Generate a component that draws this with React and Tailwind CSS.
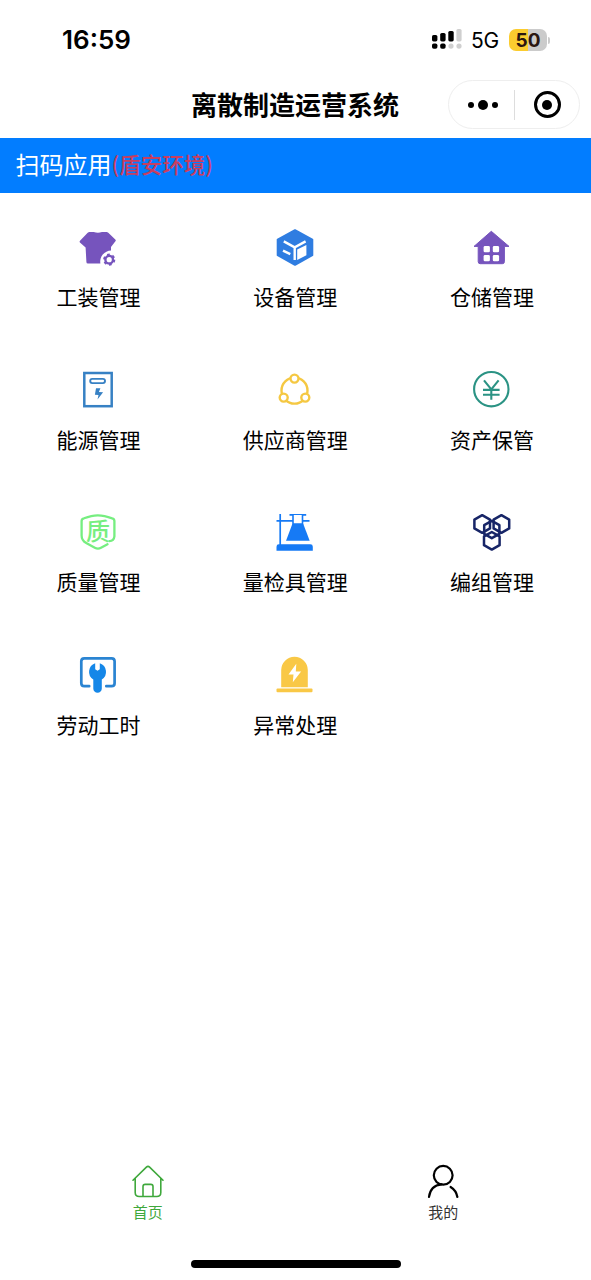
const svgProps = {
  viewBox: "0 0 40 40",
  fill: "none",
  className: "block w-10 h-10",
};

function ToolingIcon() {
  return (
    <svg {...svgProps}>
      <path d="M11.5 4h4.3q4.2 1.6 8.2 0h4.5q1 0 1.8.7l7 6.8q.9.9.1 1.8l-4.4 5.6v3.7a11 11 0 0 0-10.6 12.9H10q-1.6 0-1.6-1.6L7.6 19.4l-5.4-4.6q-1.1-1-.2-2l7.7-8.1q.8-.7 1.8-.7z" fill="#7654bd" />
      <circle cx="31.2" cy="31.7" r="3.8" stroke="#7654bd" strokeWidth="2.4" />
      <circle cx="31.2" cy="31.7" r="5.2" stroke="#7654bd" strokeWidth="1.8" strokeDasharray="2.7 2.745" />
    </svg>
  );
}

function DeviceIcon() {
  return (
    <svg {...svgProps}>
      <path d="M20 2.2 37.3 11.6v15.6L20 36.8 2.7 27.2V11.6z" fill="#2f7de1" stroke="#2f7de1" strokeWidth="2" strokeLinejoin="round" />
      <path d="m8.8 13.4 10.9 6 10.9-6M19.7 19.4V32M8 22.6l7.3 3.6" stroke="#fff" strokeWidth="2.4" />
      <path d="m22.2 21.6 9.2-4.6v10.2l-9.2 4.9z" fill="#fff" />
    </svg>
  );
}

function WarehouseIcon() {
  return (
    <svg {...svgProps}>
      <path d="M19.3 3.3 37 18.4H32.4v15.3a2 2 0 0 1-2 2H8.2a2 2 0 0 1-2-2V18.4H2z" fill="#7654bd" stroke="#7654bd" strokeWidth="1" strokeLinejoin="round" />
      <rect x="11.6" y="18" width="6.3" height="6.3" rx="1.4" fill="#fff" />
      <rect x="20.8" y="18" width="6.3" height="6.3" rx="1.4" fill="#fff" />
      <rect x="11.6" y="27" width="6.3" height="6.3" rx="1.4" fill="#fff" />
      <rect x="20.8" y="27" width="6.3" height="6.3" rx="1.4" fill="#fff" />
    </svg>
  );
}

function EnergyIcon() {
  return (
    <svg {...svgProps}>
      <rect x="6.3" y="3" width="27.4" height="33.2" stroke="#3781c4" strokeWidth="2.5" />
      <rect x="12.2" y="8.9" width="14.8" height="4.2" rx="2.1" stroke="#3781c4" strokeWidth="1.9" />
      <path d="M18 18.3h4.4l-1.5 3.8 4.2.2-5.6 7.2 1-4.5-3.6-.2z" fill="#3781c4" />
    </svg>
  );
}

function SupplierIcon() {
  return (
    <svg {...svgProps}>
      <circle cx="19.5" cy="20.6" r="13" stroke="#f5c842" strokeWidth="2.4" />
      <circle cx="19.5" cy="8.6" r="4" fill="#fff" stroke="#f5c842" strokeWidth="2.4" />
      <circle cx="8.7" cy="27.6" r="4" fill="#fff" stroke="#f5c842" strokeWidth="2.4" />
      <circle cx="30.3" cy="27.6" r="4" fill="#fff" stroke="#f5c842" strokeWidth="2.4" />
    </svg>
  );
}

function AssetIcon() {
  return (
    <svg {...svgProps}>
      <circle cx="19.3" cy="19.2" r="17.2" stroke="#2b9384" strokeWidth="2.1" />
      <path d="m12 10.4 7.3 9 7.3-9M19.3 19.4v10.4M11 19.9h16.6M11 24.7h16.6" stroke="#2b9384" strokeWidth="2.1" />
    </svg>
  );
}

function QualityIcon() {
  return (
    <svg {...svgProps}>
      <path d="M36.4 20V8q0-2.2-2.2-2.7Q26 2.4 20 2.3T6 5.3Q3.6 5.9 3.6 8v14.5q0 5 4.6 7.6l8.6 4.7q3.2 1.7 6.2 0l6.5-3.6M36.4 20v3.4q-.5 4.6-5 4.8" stroke="#76ee80" strokeWidth="2.3" strokeLinecap="round" />
      <text x="20" y="27" textAnchor="middle" fontSize="24" fontWeight="500" fontFamily="'Noto Sans CJK SC', sans-serif" fill="#76ee80">质</text>
    </svg>
  );
}

function GaugeIcon() {
  return (
    <svg {...svgProps}>
      <path d="M5.2 1v31M1.5 7.9h33M14.5 1.8h16.7" stroke="#167af5" strokeWidth="1.7" />
      <path d="M18 2v9h9.5V2" fill="#fff" stroke="#167af5" strokeWidth="1.6" />
      <path d="M17.3 11h11l6.4 16.7H11z" fill="#167af5" />
      <path d="M1.5 37.7v-4q0-2.4 2.4-2.4h31.4q2.5 0 2.5 2.4v4z" fill="#167af5" />
    </svg>
  );
}

function GroupIcon() {
  return (
    <svg {...svgProps} stroke="#172567" strokeWidth="2.5" strokeLinejoin="round">
      <path d="m10.2 2.2 7.8 4.4v8.8l-7.8 4.4-7.8-4.4V6.6z" />
      <path d="m29.4 2.2 7.8 4.4v8.8l-7.8 4.4-7.8-4.4V6.6z" />
      <path d="m19.8 7.8 7.6 4.4v8.6l-7.6 4.4-7.6-4.4v-8.6z" />
      <path d="m19.8 19 7.8 4.4v8.8l-7.8 4.4-7.8-4.4v-8.8z" />
    </svg>
  );
}

function LaborIcon() {
  return (
    <svg {...svgProps}>
      <path d="M11.2 31.2H6.3q-3-.1-3-3V6.3q0-3 3-3h27.3q3 0 3 3v21.9q0 3-3 3h-5.3" stroke="#2a84d2" strokeWidth="2.7" strokeLinecap="round" />
      <path d="M17.2 8.3v6l2.3 1.5 2.3-1.5v-6a9.1 9.1 0 0 1 2 16.3v9a4.2 4.2 0 0 1-8.5 0v-9a9.1 9.1 0 0 1 1.9-16.3z" fill="#1587e8" />
    </svg>
  );
}

function AlarmIcon() {
  return (
    <svg {...svgProps}>
      <path d="M6.2 32.2V15.1a13.3 13.3 0 0 1 26.6 0v17.1z" fill="#f9c846" />
      <rect x="1.5" y="33.4" width="36" height="3.9" rx="1" fill="#f9c846" />
      <path d="m21.3 8.8-7.8 10.7h5l-.7 7.7 8.3-10.8h-5.3z" fill="#fff" />
    </svg>
  );
}

const apps = [
  { name: "工装管理", Icon: ToolingIcon },
  { name: "设备管理", Icon: DeviceIcon },
  { name: "仓储管理", Icon: WarehouseIcon },
  { name: "能源管理", Icon: EnergyIcon },
  { name: "供应商管理", Icon: SupplierIcon },
  { name: "资产保管", Icon: AssetIcon },
  { name: "质量管理", Icon: QualityIcon },
  { name: "量检具管理", Icon: GaugeIcon },
  { name: "编组管理", Icon: GroupIcon },
  { name: "劳动工时", Icon: LaborIcon },
  { name: "异常处理", Icon: AlarmIcon },
];

function StatusBar() {
  return (
    <div className="h-20 pl-[62px] pr-[41px] flex items-center justify-between font-['Inter','Liberation_Sans',sans-serif]">
      <span className="text-[26px] font-semibold leading-none">16:59</span>
      <div className="flex items-center">
        <svg viewBox="0 0 30 22" className="w-[30px] h-[22px]">
          <rect x="0" y="6" width="5.4" height="6.4" rx="1.6" />
          <rect x="8.2" y="4" width="5.4" height="8.4" rx="1.6" />
          <rect x="16.3" y="2" width="5.4" height="10.4" rx="1.6" />
          <rect x="24.4" y="0" width="5.2" height="12.4" rx="1.6" fill="#cfcfcf" />
          <rect x="0" y="14.4" width="5.4" height="5.4" rx="1.8" />
          <rect x="8.2" y="14.4" width="5.4" height="5.4" rx="1.8" />
          <circle cx="19" cy="17.1" r="2.6" fill="#cfcfcf" />
          <circle cx="27" cy="17.1" r="2.6" fill="#cfcfcf" />
        </svg>
        <span className="ml-[9px] w-[29px] pt-px text-[21px] leading-none tracking-[-0.2px]">5G</span>
        <div className="ml-[9px] w-[38px] h-[22px] rounded-[7px] bg-linear-to-r from-[#fbcc2f] from-50% to-[#cbcbcb] to-50% flex items-center justify-center">
          <span className="text-[19px] font-bold leading-none text-[#2a1610]">50</span>
        </div>
        <span className="ml-px w-[2px] h-[7px] rounded-r bg-[#cbcbcb]" />
      </div>
    </div>
  );
}

function NavBar() {
  return (
    <div className="h-[58px] grid grid-cols-[1fr_209px_1fr] items-start">
      <h1 className="col-start-2 pt-[5px] text-[26px] leading-[38px] font-bold whitespace-nowrap">离散制造运营系统</h1>
      <div className="justify-self-end mr-[11px] w-[132px] h-[49px] rounded-full border border-[#eeeeee] flex items-center">
        <div className="w-[65px] flex items-center justify-center gap-[4px] pl-[3px]">
          <span className="size-[6px] rounded-full bg-black" />
          <span className="size-[10px] rounded-full bg-black" />
          <span className="size-[6px] rounded-full bg-black" />
        </div>
        <span className="w-px h-[30px] bg-[#dddddd]" />
        <div className="flex-1 flex justify-center">
          <span className="size-[27px] rounded-full border-[3.5px] border-black flex items-center justify-center">
            <span className="size-[10px] rounded-full bg-black" />
          </span>
        </div>
      </div>
    </div>
  );
}

function App() {
  return (
    <div className="h-[1280px] flex flex-col bg-white text-black overflow-hidden font-['Noto_Sans_CJK_SC',sans-serif]">
      <StatusBar />
      <NavBar />

      <div className="h-[55px] bg-[#027dff] pl-[15.5px] pb-[3px] flex items-center text-white">
        <span className="text-[24px] leading-[50px]">扫码应用</span>
        <span className="text-[21.5px] leading-[50px] font-medium text-[#c83e61]">(盾安环境)</span>
      </div>

      <div className="pr-[0.6px] grid grid-cols-3 auto-rows-[142.5px]">
        {apps.map(({ name, Icon }) => (
          <div key={name} className="pt-[34.5px] flex flex-col items-center">
            <Icon />
            <span className="mt-[13.5px] text-[21px] leading-[30px]">{name}</span>
          </div>
        ))}
      </div>

      <div className="mt-auto h-[97px] grid grid-cols-2 text-[15px] leading-[20px]">
        <div className="flex flex-col items-center text-[#3fa83c]">
          <svg viewBox="0 0 36 36" fill="none" stroke="currentColor" strokeWidth="1.6" strokeLinecap="round" strokeLinejoin="round" className="w-9 h-9">
            <path d="M3 17.2 16.4 4.1q1.6-1.5 3.2 0L33 17.2M5.2 15.5v14q0 4 4 4h17.6q4 0 4-4v-14M13 33.2V23.6q0-2.2 2.2-2.2h5.6q2.2 0 2.2 2.2v9.6" />
          </svg>
          <span className="mt-[3px]">首页</span>
        </div>
        <div className="flex flex-col items-center text-[#333333]">
          <svg viewBox="0 0 36 36" fill="none" stroke="#000" strokeWidth="2.2" strokeLinecap="round" className="w-9 h-9">
            <circle cx="18.2" cy="12.3" r="9.4" />
            <path d="M4 34q1.3-11.6 12.6-12.7M25.6 24q5.6 3.4 6.8 10" />
          </svg>
          <span className="mt-[3px]">我的</span>
        </div>
      </div>
      <div className="h-[8px] w-[210px] mx-auto mb-[12px] rounded-full bg-black shrink-0" />
    </div>
  );
}

export default App;
